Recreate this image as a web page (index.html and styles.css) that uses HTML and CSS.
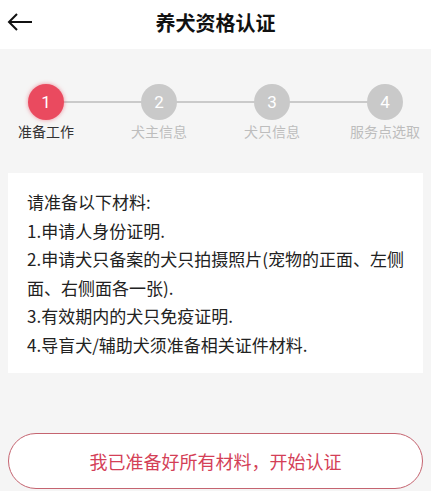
FILE: index.html
```html
<!DOCTYPE html>
<html lang="zh">
<head>
<meta charset="utf-8">
<link rel="stylesheet" href="styles.css">
</head>
<body>
<header class="header">
  <svg class="back" width="26" height="20" viewBox="0 0 26 20"><path d="M25 10H2M10 2L2 10l8 8" fill="none" stroke="#111" stroke-width="2"/></svg>
  <h1 class="title">养犬资格认证</h1>
</header>
<main class="main">
  <div class="steps">
    <div class="step active"><div class="dot">1</div><div class="label">准备工作</div></div>
    <div class="step"><div class="dot">2</div><div class="label">犬主信息</div></div>
    <div class="step"><div class="dot">3</div><div class="label">犬只信息</div></div>
    <div class="step"><div class="dot">4</div><div class="label">服务点选取</div></div>
  </div>
  <section class="card">
    <p>请准备以下材料:</p>
    <p>1.申请人身份证明.</p>
    <p>2.申请犬只备案的犬只拍摄照片(宠物的正面、左侧面、右侧面各一张).</p>
    <p>3.有效期内的犬只免疫证明.</p>
    <p>4.导盲犬/辅助犬须准备相关证件材料.</p>
  </section>
  <button class="btn">我已准备好所有材料，开始认证</button>
</main>
</body>
</html>
```
FILE: styles.css
```css
* { box-sizing: border-box; }
html, body { margin: 0; padding: 0; }
body {
  width: 431px;
  height: 491px;
  overflow: hidden;
  background: #f5f5f5;
  font-family: "Noto Sans CJK SC", "Noto Sans", sans-serif;
}
.header {
  height: 49px;
  background: #fff;
  display: flex;
  align-items: center;
  justify-content: center;
  position: relative;
}
.back {
  position: absolute;
  left: 7px;
  top: 12px;
}
.title {
  margin: 0;
  font-size: 20px;
  font-weight: 700;
  color: #111;
  line-height: 1;
  margin-top: -4px;
}
.main {
  padding: 35px 8px 0;
}
.steps {
  position: relative;
  display: flex;
  justify-content: space-between;
  padding: 0 3px;
}
.steps::before {
  content: "";
  position: absolute;
  left: 38px;
  right: 38px;
  top: 17px;
  height: 2px;
  background: #cacaca;
}
.step {
  width: 70px;
  display: flex;
  flex-direction: column;
  align-items: center;
  position: relative;
  z-index: 1;
}
.dot {
  width: 36px;
  height: 36px;
  border-radius: 50%;
  background: #c9c9c9;
  color: #fff;
  font-size: 17px;
  display: flex;
  align-items: center;
  justify-content: center;
  font-family: "Roboto", "Noto Sans", sans-serif;
}
.active .dot {
  background: #ea4a5f;
  box-shadow: 0 0 4px rgba(234, 74, 95, 0.6);
}
.label {
  margin-top: 2px;
  font-size: 14px;
  line-height: 18px;
  color: #bdbdbd;
  white-space: nowrap;
}
.active .label { color: #333; }
.card {
  margin-top: 33px;
  background: #fff;
  padding: 15px 16px 13px 19px;
  height: 200px;
}
.card p {
  margin: 0;
  font-size: 17px;
  line-height: 28.5px;
  color: #222;
}
.btn {
  display: block;
  width: 100%;
  height: 56px;
  margin-top: 60px;
  border: 1px solid #c56470;
  border-radius: 28px;
  background: #fff;
  color: #d43f57;
  font-size: 18px;
  font-family: "Noto Sans CJK SC", "Noto Sans", sans-serif;
  padding: 0;
}
```
